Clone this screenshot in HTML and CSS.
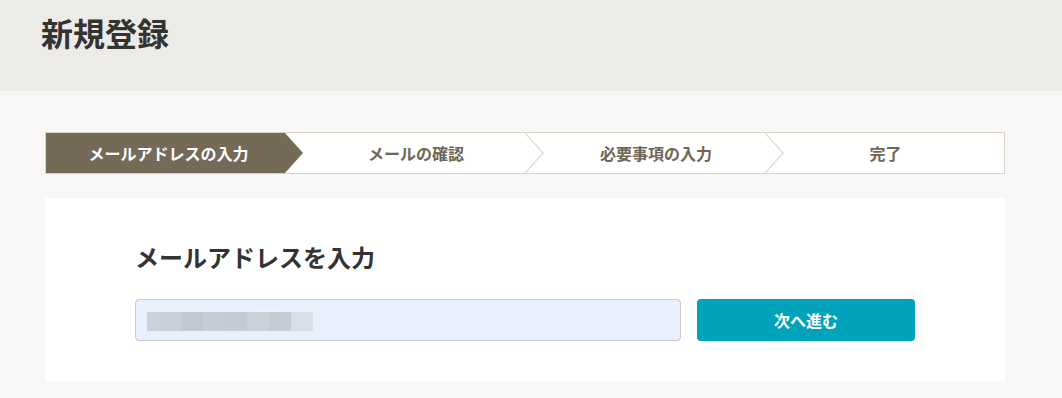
FILE: index.html
```html
<!DOCTYPE html>
<html lang="ja">
<head>
    <meta charset="UTF-8">
    <meta name="viewport" content="width=device-width, initial-scale=1.0">
    <title>新規登録</title>
    <link rel="stylesheet" href="styles.css">
</head>
<body>
    <div class="header">
        <h1>新規登録</h1>
    </div>
    <div class="main">
        <ol class="steps">
            <li class="step active">
                <span class="label">メールアドレスの入力</span>
                <svg class="arrow" width="19" height="40" viewBox="0 0 19 40"><polygon points="0,0 18,20 0,40" fill="#756a58"/></svg>
            </li>
            <li class="step step-2">
                <span class="label">メールの確認</span>
                <svg class="arrow" width="19" height="40" viewBox="0 0 19 40"><polyline points="0,0 18,20 0,40" fill="#fff" stroke="#e2ded5" stroke-width="1.5"/></svg>
            </li>
            <li class="step step-3">
                <span class="label">必要事項の入力</span>
                <svg class="arrow" width="19" height="40" viewBox="0 0 19 40"><polyline points="0,0 18,20 0,40" fill="#fff" stroke="#e2ded5" stroke-width="1.5"/></svg>
            </li>
            <li class="step step-4">
                <span class="label">完了</span>
            </li>
        </ol>
        <div class="card">
            <h2>メールアドレスを入力</h2>
            <form class="row" onsubmit="return false">
                <div class="field">
                    <span class="blur b1"></span><span class="blur b2"></span><span class="blur b3"></span><span class="blur b4"></span><span class="blur b5"></span><span class="blur b6"></span><span class="blur b7"></span><span class="blur b8"></span>
                </div>
                <button type="submit">次へ進む</button>
            </form>
        </div>
    </div>
</body>
</html>
```

FILE: styles.css
```css
body {
    margin: 0;
    background-color: #f8f7f5;
    font-family: "Noto Sans CJK JP", "Noto Sans", sans-serif;
    color: #333;
}
.header {
    height: 91px;
    background-color: #edebe7;
    padding-left: 41px;
    box-sizing: border-box;
}
.header h1 {
    margin: 0;
    padding-top: 9px;
    font-size: 32px;
    line-height: 46px;
    font-weight: bold;
    color: #333;
}
.main {
    width: 960px;
    margin-left: 45px;
    padding-top: 41px;
}
.steps {
    list-style: none;
    margin: 0;
    padding: 0;
    display: flex;
    height: 40px;
    border: 1px solid #d8d2c6;
    background: white;
}
.step {
    flex: 0 0 240px;
    box-sizing: border-box;
    position: relative;
    display: flex;
    align-items: center;
    justify-content: center;
    font-size: 16px;
    font-weight: bold;
    color: #6e6556;
}
.step.active {
    flex-basis: 239px;
    background-color: #756a58;
    color: white;
    padding-left: 6px;
}
.step-2, .step-3 {
    padding-left: 22px;
}
.step-4 {
    flex-basis: 239px;
    padding-left: 2px;
}
.step .arrow {
    position: absolute;
    top: 0;
    left: 100%;
    z-index: 1;
}
.card {
    margin-top: 24px;
    background: white;
    padding: 41px 90px 40px;
}
.card h2 {
    margin: 0 0 24px;
    font-size: 24px;
    line-height: 36px;
    font-weight: bold;
    color: #333;
}
.row {
    display: flex;
    gap: 16px;
}
.field {
    width: 546px;
    height: 42px;
    box-sizing: border-box;
    border: 1px solid #c9ccd2;
    border-radius: 4px;
    background-color: #e8f0fe;
    display: flex;
    align-items: center;
    padding: 2px 0 0 11px;
}
.blur {
    display: inline-block;
    height: 19px;
    width: 22px;
    background: #cdd2db;
}
.b1 { width: 12px; background: #cbd0d9; }
.b2 { background: #c9ced8; }
.b3 { background: #c2c7d1; }
.b4 { background: #c7ccd5; }
.b5 { background: #c5cbd4; }
.b6 { background: #cbd1d9; }
.b7 { background: #c6cbd4; }
.b8 { background: #d9dfe8; }
button {
    width: 218px;
    height: 42px;
    background-color: #00a3b9;
    color: white;
    border: none;
    border-radius: 4px;
    font-family: inherit;
    font-size: 16px;
    font-weight: bold;
    cursor: pointer;
}
button:hover {
    background-color: #0093a7;
}
```
